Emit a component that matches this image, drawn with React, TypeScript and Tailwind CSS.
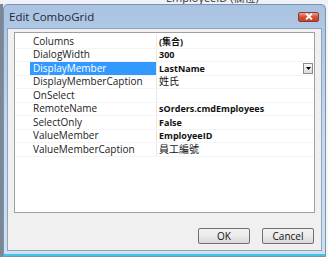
import React from "react";

const rows: { name: string; value: string; bold?: boolean; selected?: boolean }[] = [
  { name: "Columns", value: "(集合)", bold: true },
  { name: "DialogWidth", value: "300", bold: true },
  { name: "DisplayMember", value: "LastName", bold: true, selected: true },
  { name: "DisplayMemberCaption", value: "姓氏" },
  { name: "OnSelect", value: "" },
  { name: "RemoteName", value: "sOrders.cmdEmployees", bold: true },
  { name: "SelectOnly", value: "False", bold: true },
  { name: "ValueMember", value: "EmployeeID", bold: true },
  { name: "ValueMemberCaption", value: "員工編號" },
];

const font = { fontFamily: '"Open Sans", "Noto Sans CJK TC", sans-serif' };

export default function App() {
  return (
    <div
      className="w-[328px] h-[257px] overflow-hidden bg-[#dfe6ee] flex flex-col"
      style={font}
    >
      <div className="h-[4px] overflow-hidden flex shrink-0 bg-[#eef2f6]">
        <div className="ml-[166px] -mt-[8px] text-[11px] leading-[12px] text-[#333]">
          EmployeeID (欄位)
        </div>
      </div>
      <div className="flex flex-1 min-h-0">
        <div className="w-[3px] bg-[#7c8795]" />
        <div className="w-[323px] flex flex-col border border-[#7d93ad] rounded-t-[5px] bg-gradient-to-b from-[#a9c3e2] via-[#c6d9ee] to-[#cfe0f2]">
          <div className="h-[23px] shrink-0 flex items-center justify-between pl-[5px] pr-[6px]">
            <span className="text-[11.5px] text-[#1e2a3a]">Edit ComboGrid</span>
            <div className="w-[21px] h-[10px] rounded-[2px] border border-[#8a3b2c] bg-gradient-to-b from-[#e9a08f] via-[#d24f35] to-[#c8412a] flex items-center justify-center">
              <svg width="8" height="7" viewBox="0 0 8 7">
                <path d="M1 0.5 L7 6.5 M7 0.5 L1 6.5" stroke="#fff" strokeWidth="1.8" />
              </svg>
            </div>
          </div>
          <div className="flex-1 mx-[3px] border border-[#8ea4bd] bg-[#f0f0f0] flex flex-col px-[6px] pt-[3px]">
            <div className="h-[181px] border border-[#a0a0a0] bg-white pt-[2px] text-[10px]">
              {rows.map((r) => (
                <div key={r.name} className="h-[13.5px] flex border-b border-[#f4f4f4]">
                  <div className="w-[15px] bg-white" />
                  <div
                    className={
                      "w-[127px] pl-[3px] flex items-center border-r border-[#e8e8e8] " +
                      (r.selected ? "bg-[#3399ff] text-white" : "text-[#222]")
                    }
                  >
                    {r.name}
                  </div>
                  <div
                    className={
                      "flex-1 pl-[2px] flex items-center justify-between text-[#111] " +
                      (r.bold ? "font-bold text-[9px]" : "")
                    }
                  >
                    <span>{r.value}</span>
                    {r.selected && (
                      <div className="w-[10px] h-[11px] mr-[1px] border border-[#8a8a8a] bg-gradient-to-b from-[#f6f6f6] to-[#dcdcdc] flex items-center justify-center">
                        <svg width="5" height="3" viewBox="0 0 5 3">
                          <path d="M0 0 H5 L2.5 3 Z" fill="#000" />
                        </svg>
                      </div>
                    )}
                  </div>
                </div>
              ))}
            </div>
            <div className="flex justify-end gap-[12px] mt-[15px] pr-[1px]">
              <button className="w-[52px] h-[16px] rounded-[2px] border border-[#707070] bg-gradient-to-b from-[#f2f2f2] via-[#ebebeb] to-[#d8d8d8] text-[10px] text-[#111] leading-none">
                OK
              </button>
              <button className="w-[52px] h-[16px] rounded-[2px] border border-[#707070] bg-gradient-to-b from-[#f2f2f2] via-[#ebebeb] to-[#d8d8d8] text-[10px] text-[#111] leading-none">
                Cancel
              </button>
            </div>
          </div>
          <div className="h-[3px] shrink-0" />
          <div className="h-[2px] shrink-0 bg-[#3fc3e8]" />
        </div>
        <div className="w-[2px] bg-[#f4f6f8]" />
      </div>
    </div>
  );
}
